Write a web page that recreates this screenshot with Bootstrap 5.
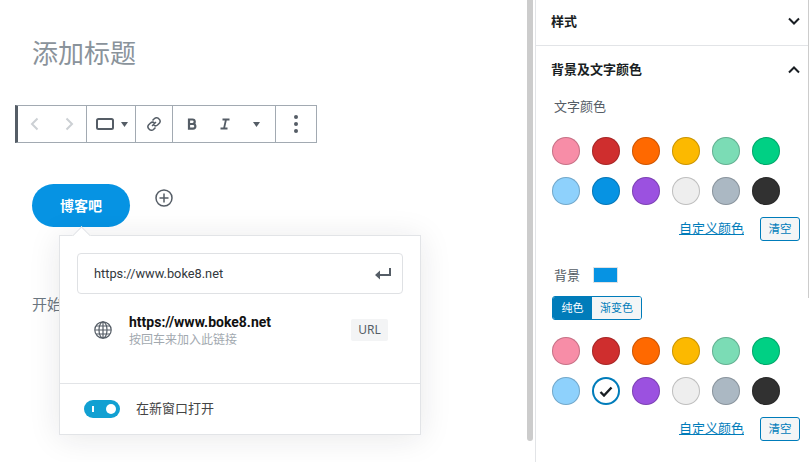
<!DOCTYPE html>
<html lang="zh-CN">
<head>
    <meta charset="UTF-8">
    <meta name="viewport" content="width=device-width, initial-scale=1.0">
    <title>添加标题</title>
    <link href="https://cdn.jsdelivr.net/npm/bootstrap@5.3.0/dist/css/bootstrap.min.css" rel="stylesheet">
    <style>
        html, body { height: 462px; overflow: hidden; }
        body { background: #fff; font-family: "Noto Sans", "Noto Sans CJK SC", sans-serif; font-size: 13px; color: #191e23; }
        .editor-area { width: 527px; height: 462px; position: relative; padding: 0 0 0 15px; flex: none; }
        .post-title { font-size: 26px; line-height: 36px; color: #8a939b; margin: 35px 0 34px 17px; }
        .block-bar { width: 302px; height: 38px; border: 1px solid #a2aab2; border-left: 3px solid #555d66; }
        .bar-group { height: 100%; border-right: 1px solid #a2aab2; color: #555d66; }
        .bar-group:last-child { border-right: 0; }
        .bar-nav { width: 69px; padding: 0 8px 0 8px; }
        .bar-shape { width: 49px; }
        .shape-caret { margin-left: 6px; }
        .bar-link { width: 37px; }
        .bar-format { width: 103px; }
        .fmt-b { margin-left: 13px; }
        .fmt-i { margin-left: 21px; }
        .fmt-caret { margin-left: 22px; }
        .bar-more { flex: 1; }
        .blog-btn { width: 98px; height: 43px; border-radius: 22px; background: #0693e3; color: #fff; font-size: 14px; font-weight: 700; border: 0; }
        .btn-row { margin: 41px 0 0 17px; }
        .add-icon { margin: 4px 0 0 24px; align-self: flex-start; }
        .intro-text { margin: 67px 0 0 17px; font-size: 15px; color: #6c7781; line-height: 20px; }
        .link-pop { position: absolute; left: 59px; top: 235px; width: 362px; height: 200px; background: #fff; border: 1px solid #e2e4e7; box-shadow: 0 3px 30px rgba(25,30,35,.1); }
        .pop-arrow { position: absolute; left: 15px; top: -7px; width: 13px; height: 13px; background: #fff; border-left: 1px solid #e2e4e7; border-top: 1px solid #e2e4e7; transform: rotate(45deg); }
        .url-field { margin: 17px 17px 0; height: 41px; border: 1px solid #dfe1e4; border-radius: 4px; padding: 0 11px 0 16px; color: #32373c; font-family: Roboto, "Noto Sans CJK SC", sans-serif; font-size: 12.800px; }
        .url-result { margin: 17px 32px 0 34px; height: 38px; }
        .result-text { margin-left: 17px; }
        .result-title { font-family: Roboto, "Noto Sans CJK SC", sans-serif; font-size: 14px; font-weight: 700; line-height: 18px; color: #111; }
        .result-sub { font-size: 12px; line-height: 17px; color: #a2a9af; }
        .url-tag { width: 37px; height: 22px; border-radius: 2px; background: #f3f4f5; color: #555d66; font-size: 12px; }
        .pop-foot { position: absolute; left: 0; right: 0; bottom: 0; height: 51px; border-top: 1px solid #e2e4e7; padding-left: 24px; color: #444; }
        .pop-toggle { width: 36px; height: 18px; border-radius: 9px; background: #11a0d2; position: relative; margin-right: 16px; }
        .pop-toggle::before { content: ""; position: absolute; left: 8px; top: 6px; width: 2px; height: 6px; background: #fff; }
        .pop-toggle::after { content: ""; position: absolute; right: 4px; top: 4px; width: 10px; height: 10px; border-radius: 50%; background: #fff; }
        .page-scroll { width: 6px; height: 441px; background: #ccc; border-radius: 0 0 3px 3px; flex: none; }
        .side-panel { width: 274px; height: 462px; margin-left: 2px; border-left: 1px solid #e2e4e7; flex: none; position: relative; }
        .side-panel::after { content: ""; position: absolute; right: 0; top: 0; width: 1px; height: 298px; background: #ccc; }
        .side-title { font-weight: 700; font-size: 13px; padding: 0 8px 2px 15px; }
        .title-style { height: 46px; border-bottom: 1px solid #e2e4e7; }
        .title-color { height: 49px; }
        .field-label { color: #555d66; padding-left: 18px; line-height: 18px; }
        .label-text { margin-top: 2px; }
        .swatch-set { display: grid; grid-template-columns: repeat(6, 28px); gap: 12px; padding-left: 16px; }
        .set-text { margin-top: 22px; }
        .swatch-dot { width: 28px; height: 28px; border-radius: 50%; box-shadow: inset 0 0 0 1px rgba(0,0,0,.2); }
        .swatch-on { background: #fff; box-shadow: inset 0 0 0 2px #007cba; }
        .swatch-row { padding: 12px 9px 0 0; }
        .custom-link { color: #007cba; text-decoration: underline; margin-right: 16px; }
        .clear-btn { width: 40px; height: 24px; padding: 0; font-size: 11.500px; color: #007cba; background: #f3f5f6; border: 1px solid #007cba; border-radius: 3px; line-height: 20px; }
        .bg-row { margin-top: 25px; }
        .bg-chip { width: 25px; height: 16px; background: #0693e3; border: 1px solid #dfe1e4; margin-left: 13px; }
        .grad-tabs { width: 90px; height: 24px; margin: 12px 0 17px 16px; border: 1px solid #007cba; border-radius: 3px; overflow: hidden; font-size: 11px; }
        .grad-tabs span { text-align: center; line-height: 22px; }
        .tab-on { width: 39px; background: #007cba; color: #fff; }
        .tab-off { flex: 1; background: #f3f5f6; color: #007cba; }
    </style>
</head>
<body>
    <div class="d-flex">
        <div class="editor-area">
            <div class="post-title">添加标题</div>
            <div class="block-bar d-flex">
                <div class="bar-group bar-nav d-flex align-items-center justify-content-between">
                    <svg width="18" height="18" viewBox="0 0 18 18" fill="none" stroke="#ccd0d4" stroke-width="2"><path d="M11.500 3.500L6 9l5.500 5.500"/></svg>
                    <svg width="18" height="18" viewBox="0 0 18 18" fill="none" stroke="#ccd0d4" stroke-width="2"><path d="M6.500 3.500L12 9l-5.500 5.500"/></svg>
                </div>
                <div class="bar-group bar-shape d-flex align-items-center">
                    <svg class="ms-2" width="20" height="14" viewBox="0 0 20 14" fill="none" stroke="#555d66" stroke-width="2"><rect x="2" y="2" width="16" height="10" rx="1.5"/></svg>
                    <svg class="shape-caret" width="7" height="5" viewBox="0 0 7 5" fill="#555d66"><path d="M0 0h7L3.500 5z"/></svg>
                </div>
                <div class="bar-group bar-link d-flex align-items-center justify-content-center">
                    <svg width="16" height="16" viewBox="0 0 16 16" fill="none" stroke="#555d66" stroke-width="1.500"><path d="M6.500 4.500l2-2a3 3 0 0 1 4.500 .500 3 3 0 0 1 .500 4l-2 2a3 3 0 0 1-4 0"/><path d="M9.500 11.500l-2 2a3 3 0 0 1-4.500-.500 3 3 0 0 1-.500-4l2-2a3 3 0 0 1 4 0"/><path d="M6 10l4-4"/></svg>
                </div>
                <div class="bar-group bar-format d-flex align-items-center">
                    <svg class="fmt-b" width="12" height="12" viewBox="0 0 12 12" fill="none" stroke="#555d66" stroke-width="2.200"><path d="M3 1.500h3.500a2.200 2.200 0 0 1 0 4.500H3zM3 6h4a2.300 2.300 0 0 1 0 4.700H3z"/></svg>
                    <svg class="fmt-i" width="12" height="12" viewBox="0 0 12 12" fill="none" stroke="#555d66" stroke-width="1.800"><path d="M3.500 1.500h7M1.500 10.500h7M7 1.500l-2 9"/></svg>
                    <svg class="fmt-caret" width="7" height="5" viewBox="0 0 7 5" fill="#555d66"><path d="M0 0h7L3.500 5z"/></svg>
                </div>
                <div class="bar-group bar-more d-flex align-items-center justify-content-center">
                    <svg width="4" height="18" viewBox="0 0 4 18" fill="#555d66"><circle cx="2" cy="2" r="2"/><circle cx="2" cy="9" r="2"/><circle cx="2" cy="16" r="2"/></svg>
                </div>
            </div>
            <div class="btn-row d-flex">
                <button class="blog-btn">博客吧</button>
                <svg class="add-icon" width="20" height="20" viewBox="0 0 20 20" fill="none" stroke="#555d66" stroke-width="1.500"><circle cx="10" cy="10" r="8"/><path d="M10 5.500v9M5.500 10h9"/></svg>
            </div>
            <div class="intro-text">开始</div>
            <div class="link-pop">
                <div class="pop-arrow"></div>
                <div class="url-field d-flex align-items-center justify-content-between position-relative bg-white">
                    <span>https://www.boke8.net</span>
                    <svg width="16" height="12" viewBox="0 0 16 12" fill="#555d66"><path d="M14 0h2v8H5v3.500L0 7l5-4.500V6h9z"/></svg>
                </div>
                <div class="url-result d-flex align-items-center">
                    <svg width="18" height="18" viewBox="0 0 18 18" fill="none" stroke="#555d66" stroke-width="1.200"><circle cx="9" cy="9" r="8.200"/><ellipse cx="9" cy="9" rx="4" ry="8.200"/><path d="M9 1v16M1 9h16M2 5h14M2 13h14"/></svg>
                    <div class="result-text flex-grow-1">
                        <div class="result-title">https://www.boke8.net</div>
                        <div class="result-sub">按回车来加入此链接</div>
                    </div>
                    <div class="url-tag d-flex align-items-center justify-content-center">URL</div>
                </div>
                <div class="pop-foot d-flex align-items-center">
                    <div class="pop-toggle"></div>
                    <span>在新窗口打开</span>
                </div>
            </div>
        </div>
        <div class="page-scroll"></div>
        <div class="side-panel">
            <div class="side-title title-style d-flex align-items-center justify-content-between">
                <span>样式</span>
                <svg width="14" height="9" viewBox="0 0 14 9" fill="none" stroke="#191e23" stroke-width="2"><path d="M2 1.500l5 5 5-5"/></svg>
            </div>
            <div class="side-title title-color d-flex align-items-center justify-content-between">
                <span>背景及文字颜色</span>
                <svg width="14" height="9" viewBox="0 0 14 9" fill="none" stroke="#191e23" stroke-width="2"><path d="M2 7.500l5-5 5 5"/></svg>
            </div>
            <div class="field-label label-text">文字颜色</div>
            <div class="swatch-set set-text" id="textColors"></div>
            <div class="swatch-row d-flex align-items-center justify-content-end">
                <a class="custom-link" href="#">自定义颜色</a>
                <button class="clear-btn">清空</button>
            </div>
            <div class="bg-row d-flex align-items-center">
                <span class="field-label">背景</span>
                <span class="bg-chip"></span>
            </div>
            <div class="grad-tabs d-flex">
                <span class="tab-on">纯色</span>
                <span class="tab-off">渐变色</span>
            </div>
            <div class="swatch-set" id="bgColors"></div>
            <div class="swatch-row d-flex align-items-center justify-content-end">
                <a class="custom-link" href="#">自定义颜色</a>
                <button class="clear-btn">清空</button>
            </div>
        </div>
    </div>

    <script>
        const palette = ['#f78da7', '#cf2e2e', '#ff6900', '#fcb900', '#7bdcb5', '#00d084',
                         '#8ed1fc', '#0693e3', '#9b51e0', '#eeeeee', '#abb8c3', '#313131'];

        function fillSwatches(id, picked) {
            const box = document.getElementById(id);
            palette.forEach((color, i) => {
                const dot = document.createElement('div');
                dot.className = 'swatch-dot';
                if (i === picked) {
                    dot.className += ' swatch-on d-flex align-items-center justify-content-center';
                    dot.innerHTML = '<svg width="14" height="11" viewBox="0 0 14 11" fill="none" stroke="#191e23" stroke-width="2.400"><path d="M1.500 6l3.500 3.500 7.500-8"/></svg>';
                } else {
                    dot.style.background = color;
                }
                box.appendChild(dot);
            });
        }

        fillSwatches('textColors', -1);
        fillSwatches('bgColors', 7);
    </script>
    <script src="https://cdn.jsdelivr.net/npm/bootstrap@5.3.0/dist/js/bootstrap.bundle.min.js"></script>
</body>
</html>
